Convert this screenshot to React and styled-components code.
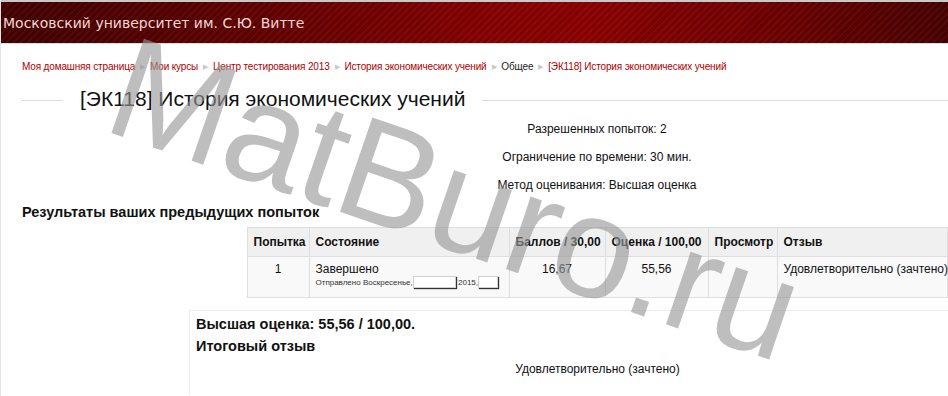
import React from 'react'
import styled, { createGlobalStyle } from 'styled-components'

const GlobalStyle = createGlobalStyle`
  html, body {
    margin: 0;
    padding: 0;
    background: #fff;
    overflow: hidden;
  }
  #root {
    width: 948px;
    height: 396px;
    overflow: hidden;
    position: relative;
    font-family: 'Liberation Sans', Arial, sans-serif;
    color: #111;
  }
`

const crumbs = [
  { text: 'Моя домашняя страница', link: true },
  { text: 'Мои курсы', link: true },
  { text: 'Центр тестирования 2013', link: true },
  { text: 'История экономических учений', link: true },
  { text: 'Общее', link: false },
  { text: '[ЭК118] История экономических учений', link: true },
]

const info = [
  'Разрешенных попыток: 2',
  'Ограничение по времени: 30 мин.',
  'Метод оценивания: Высшая оценка',
]

const columns = [
  { title: 'Попытка', width: 62 },
  { title: 'Состояние', width: 200 },
  { title: 'Баллов / 30,00', width: 96 },
  { title: 'Оценка / 100,00', width: 103 },
  { title: 'Просмотр', width: 69 },
  { title: 'Отзыв', width: 170 },
]

const App = () => {
  return (
    <Page>
      <GlobalStyle />
      <Header>
        <SiteTitle>Московский университет им. С.Ю. Витте</SiteTitle>
      </Header>
      <Main>
        <Breadcrumb>
          {crumbs.map((c, i) => (
            <React.Fragment key={c.text}>
              {i > 0 && <Sep>▶</Sep>}
              <Crumb $link={c.link}>{c.text}</Crumb>
            </React.Fragment>
          ))}
        </Breadcrumb>
        <Heading>
          <Rule $short />
          <h2>[ЭК118] История экономических учений</h2>
          <Rule />
        </Heading>
        <Info>
          {info.map((line) => (
            <p key={line}>{line}</p>
          ))}
        </Info>
        <SectionTitle>Результаты ваших предыдущих попыток</SectionTitle>
        <Table>
          <colgroup>
            {columns.map((c) => (
              <col key={c.title} style={{ width: c.width }} />
            ))}
          </colgroup>
          <thead>
            <HeadRow>
              {columns.map((c) => (
                <th key={c.title}>{c.title}</th>
              ))}
            </HeadRow>
          </thead>
          <tbody>
            <DataRow>
              <Td $center>1</Td>
              <Td>
                Завершено
                <Submitted>
                  Отправлено Воскресенье,<Redact $w={41} /> 2015,<Redact $w={18} />
                </Submitted>
              </Td>
              <Td $center>16,67</Td>
              <Td $center>55,56</Td>
              <Td />
              <Td>Удовлетворительно (зачтено)</Td>
            </DataRow>
          </tbody>
        </Table>
        <Summary>
          <SummaryTitle>Высшая оценка: 55,56 / 100,00.</SummaryTitle>
          <SummaryTitle>Итоговый отзыв</SummaryTitle>
          <Feedback>Удовлетворительно (зачтено)</Feedback>
        </Summary>
      </Main>
      <Watermark>MatBuro.ru</Watermark>
    </Page>
  )
}

const Page = styled.div`
  width: 948px;
  height: 396px;
  border-left: 1px solid #e6e6e6;
  box-sizing: border-box;
`

const Header = styled.header`
  height: 41px;
  border-top: 2px solid #c9c9c9;
  border-bottom: 1px solid #dcdcdc;
  display: flex;
  align-items: center;
  background:
    repeating-linear-gradient(
      -45deg,
      rgba(255, 255, 255, 0.04) 0 2px,
      rgba(0, 0, 0, 0.04) 2px 5px
    ),
    linear-gradient(
      90deg,
      #420000 0%,
      #5e0000 25%,
      #820000 50%,
      #8a0000 62%,
      #6c0000 82%,
      #470000 100%
    );
`

const SiteTitle = styled.h1`
  margin: 0 0 0 2px;
  font-family: 'DejaVu Sans', 'Open Sans', sans-serif;
  font-weight: normal;
  font-size: 14px;
  color: #f3d6d6;
`

const Main = styled.main`
  width: 1150px;
  margin-left: 21px;
`

const Breadcrumb = styled.div`
  margin-top: 16px;
  font-size: 10px;
  letter-spacing: -0.15px;
  line-height: 14px;
  white-space: nowrap;
`

const Crumb = styled.span`
  color: ${(p) => (p.$link ? '#b00000' : '#222')};
`

const Sep = styled.span`
  display: inline-block;
  margin: 0 5px;
  font-size: 7px;
  color: #c8c8c8;
  vertical-align: 1px;
`

const Heading = styled.div`
  display: flex;
  align-items: center;
  gap: 17px;
  height: 30px;
  margin-top: 10px;
  h2 {
    margin: 0;
    font-size: 21px;
    font-weight: normal;
    white-space: nowrap;
    color: #111;
  }
`

const Rule = styled.div`
  height: 1px;
  background: #dcdcdc;
  flex: ${(p) => (p.$short ? '0 0 41px' : '1')};
  margin-top: 3px;
`

const Info = styled.div`
  margin-top: 7px;
  display: flex;
  flex-direction: column;
  gap: 12px;
  text-align: center;
  p {
    margin: 0;
    font-size: 12px;
    line-height: 16px;
  }
`

const SectionTitle = styled.h3`
  margin: 10px 0 0;
  font-size: 14.5px;
  line-height: 18px;
  font-weight: bold;
`

const Table = styled.table`
  margin: 6px auto 0;
  width: 700px;
  table-layout: fixed;
  border-collapse: collapse;
  font-size: 12px;
  th {
    background: #f0f0f0;
    border: 1px solid #dedede;
    padding: 0 6px;
    text-align: left;
    font-weight: bold;
    white-space: nowrap;
  }
`

const HeadRow = styled.tr`
  height: 29px;
`

const DataRow = styled.tr`
  height: 41px;
`

const Td = styled.td`
  background: #f9f9f9;
  border: 1px solid #dedede;
  padding: 5px 6px 0;
  vertical-align: top;
  text-align: ${(p) => (p.$center ? 'center' : 'left')};
  white-space: nowrap;
  line-height: 14px;
`

const Submitted = styled.div`
  font-size: 8px;
  line-height: 12px;
  color: #333;
`

const Redact = styled.span`
  display: inline-block;
  width: ${(p) => p.$w}px;
  height: 10px;
  background: #fff;
  border: 1px solid #d0d0d0;
  vertical-align: -3px;
  box-shadow: 1px 1px 1px #333;
`

const Summary = styled.section`
  margin: 12px 167px 0;
  border-top: 1px solid #ececec;
  border-left: 1px solid #ececec;
  padding: 4px 6px 0;
  height: 80px;
`

const SummaryTitle = styled.div`
  font-size: 14.5px;
  line-height: 18px;
  font-weight: bold;
  margin-bottom: 4px;
`

const Feedback = styled.div`
  margin-top: 6px;
  font-size: 12px;
  line-height: 16px;
  text-align: center;
`

const Watermark = styled.div`
  position: absolute;
  left: 140px;
  top: 14px;
  transform-origin: left top;
  transform: rotate(19deg);
  font-family: 'Liberation Sans', Arial, sans-serif;
  font-size: 145px;
  line-height: 1;
  color: rgba(150, 150, 150, 0.62);
  white-space: nowrap;
  pointer-events: none;
`

export default App
